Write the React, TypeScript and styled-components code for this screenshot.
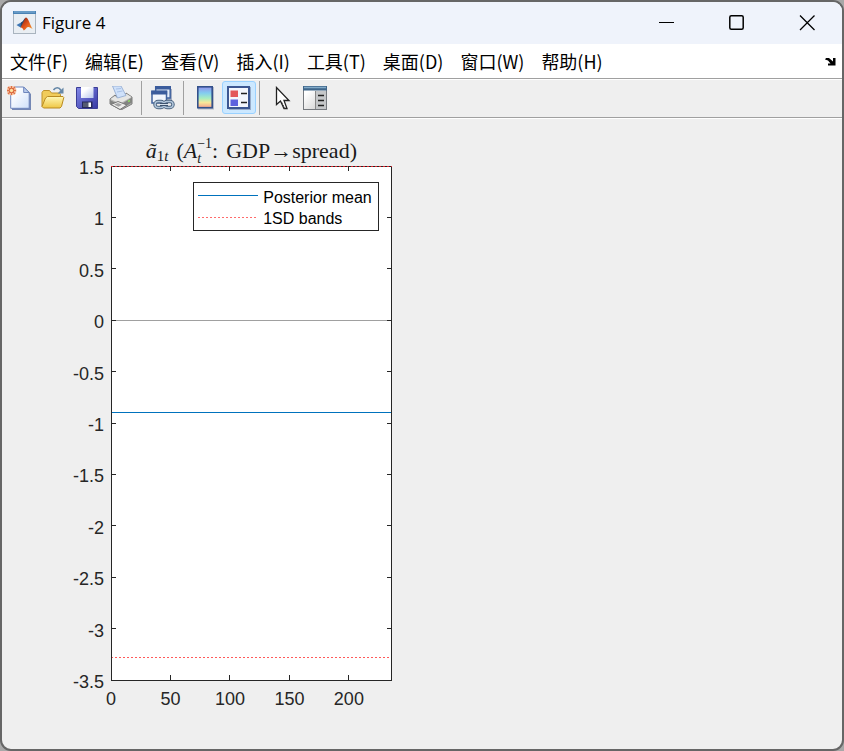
import React from "react";
import styled, { createGlobalStyle } from "styled-components";

const GlobalStyle = createGlobalStyle`
  *, *::before, *::after { box-sizing: border-box; }
  body { margin: 0; background: #a8a8a8; }
  button { font: inherit; color: inherit; }
`;

const Window = styled.main`
  display: flex;
  flex-direction: column;
  min-height: 100vh;
  border: 2px solid #666;
  border-radius: 11px;
  overflow: hidden;
  background: #efefef;
  color: #000;
  font-family: "Noto Sans", "Noto Sans CJK SC", sans-serif;
`;

const TitleBar = styled.header`
  display: flex;
  align-items: center;
  height: 42px;
  padding-left: 11px;
  gap: 5px;
  background: #eff3fb;
`;

const WindowTitle = styled.h1`
  flex: 1;
  margin: 0;
  font-family: "Open Sans", "Noto Sans", sans-serif;
  font-size: 17px;
  font-weight: 400;
  line-height: 24px;
`;

const WindowControls = styled.div`
  display: flex;
  height: 100%;
`;

const ControlButton = styled.button`
  display: grid;
  place-items: center;
  width: 70px;
  padding: 0;
  border: 0;
  background: transparent;
`;

const MenuBar = styled.nav`
  display: flex;
  align-items: center;
  gap: 17px;
  height: 34px;
  padding: 0 6px 0 8px;
  background: #fff;
  font-family: "Noto Sans CJK SC", sans-serif;
  font-size: 18px;
  line-height: 26px;
`;

const MenuButton = styled.button`
  padding: 0;
  border: 0;
  background: transparent;
  white-space: nowrap;
`;

const DockButton = styled(MenuButton)`
  display: flex;
  margin-left: auto;
`;

const ToolBar = styled.div`
  display: flex;
  align-items: flex-start;
  height: 41px;
  padding-top: 1px;
  border-top: 1px solid #a0a0a0;
  border-bottom: 1px solid #fff;
  box-shadow: inset 0 1px #fff, inset 0 -1px #a0a0a0;
`;

const ToolButton = styled.button<{ $active?: boolean }>`
  display: grid;
  place-items: center;
  flex: none;
  width: 34px;
  height: 33px;
  margin-top: 1px;
  padding: 0;
  border: 1px solid ${(p) => (p.$active ? "#99d1ff" : "transparent")};
  border-radius: 3px;
  background: ${(p) => (p.$active ? "#cce8ff" : "transparent")};
`;

const Separator = styled.span`
  width: 1px;
  height: 34px;
  margin: 1px 4px 0 3px;
  background: #a0a0a0;
`;

const Canvas = styled.section`
  display: flex;
  flex: 1;
  flex-direction: column;
  padding: 16px 0 69px 109px;
`;

const Axes = styled.figure`
  display: flex;
  flex: 1;
  flex-direction: column;
  width: 38.4%;
  min-width: 240px;
  margin: 0;
`;

const PlotTitle = styled.figcaption`
  display: flex;
  justify-content: center;
  align-items: baseline;
  height: 31px;
  color: #1a1a1a;
  font-family: "Liberation Serif", serif;
  font-size: 22px;
  line-height: 31px;
  white-space: nowrap;
`;

const Sub = styled.sub`
  font-size: 15px;
  line-height: 1;
  vertical-align: -3px;
`;

const Scripts = styled.span`
  display: inline-grid;
  align-self: center;
  font-size: 14px;
  line-height: 15px;
`;

const Gap = styled.span`
  width: 8px;
`;

const PlotArea = styled.div`
  position: relative;
  flex: 1;
  min-height: 240px;
`;

const PlotSvg = styled.svg`
  position: absolute;
  inset: 0;
  width: 100%;
  height: 100%;
  overflow: visible;
  shape-rendering: crispEdges;
  font-family: "Liberation Sans", sans-serif;
  font-size: 18px;
  fill: #262626;
`;

const Legend = styled.ul`
  position: absolute;
  top: 16px;
  right: 13px;
  display: flex;
  flex-direction: column;
  margin: 0;
  padding: 4px 6px 1px 4px;
  list-style: none;
  border: 1px solid #262626;
  background: #fff;
  color: #000;
  font-family: "Liberation Sans", sans-serif;
  font-size: 16px;
  line-height: 21px;
`;

const LegendItem = styled.li`
  display: flex;
  gap: 5px;
  height: 21px;
  white-space: nowrap;
`;

const X_MAX = 236;
const xPos = (v: number) => `${(v / X_MAX) * 100}%`;
const yPos = (v: number) => `${((1.5 - v) / 5) * 100}%`;
const X_TICKS = [0, 50, 100, 150, 200];
const Y_TICKS = [1.5, 1, 0.5, 0, -0.5, -1, -1.5, -2, -2.5, -3, -3.5];
const MENUS = ["文件(F)", "编辑(E)", "查看(V)", "插入(I)", "工具(T)", "桌面(D)", "窗口(W)", "帮助(H)"];

function Icon({ children }: { children: React.ReactNode }) {
  return (
    <svg width="24" height="24" viewBox="0 0 24 24" aria-hidden="true">
      {children}
    </svg>
  );
}

const MatlabIcon = () => (
  <Icon>
    <defs>
      <linearGradient id="peak" x1="0" y1="0" x2="1" y2="1">
        <stop offset="0" stopColor="#7c1c12" />
        <stop offset=".5" stopColor="#e0521b" />
        <stop offset="1" stopColor="#f6a02c" />
      </linearGradient>
    </defs>
    <rect x=".5" y=".5" width="22" height="22" fill="#e9eef3" stroke="#a9b4bf" />
    <path d="M0 0h23v3H0z" fill="#4a82b4" />
    <path d="M1 1h21" stroke="#86b4da" />
    <path d="M3.500 14 8 11.400l2.600.5-3 4.600-1.700-1z" fill="#3d76b4" />
    <path d="M8 11.400c2-.6 3.400-4.600 4.900-4.700L10.600 14l-3 2.500z" fill="#29486f" />
    <path d="M12.900 6.500c-1.300 1-2.700 5.600-5.300 10 1.500-.1 2.200 1.200 3.200 3 1.600-.6 2.500-3.200 4.200-3.500 1.700-.2 2.700.8 4.700 2.200-2.400-3.200-4.400-12.200-6.800-11.700z" fill="url(#peak)" />
  </Icon>
);

const NewIcon = () => (
  <Icon>
    <defs>
      <linearGradient id="paper" x1="0" y1="0" x2="1" y2="1">
        <stop offset=".2" stopColor="#fff" />
        <stop offset="1" stopColor="#cfe0fa" />
      </linearGradient>
    </defs>
    <path d="M5 2h13l6 6v16H5z" fill="#7487b4" />
    <path d="M3.700 1h13l5.500 5.500v15.800H3.700z" fill="url(#paper)" stroke="#6e86bd" />
    <path d="M16.700 1v5.500h5.500z" fill="#b9cbea" stroke="#6e86bd" />
    <circle cx="4.500" cy="4.500" r="5" fill="#f8c9ab" />
    <path d="M4.500 0v9M0 4.500h9M1 1l7 7M8 1 1 8" stroke="#de7045" strokeWidth="1.300" />
    <circle cx="4.500" cy="4.500" r="2.200" fill="#ffe3a1" stroke="#d85c35" />
  </Icon>
);

const OpenIcon = () => (
  <Icon>
    <defs>
      <linearGradient id="folder" x1="0" y1="0" x2="0" y2="1">
        <stop offset="0" stopColor="#fff8b4" />
        <stop offset="1" stopColor="#efc644" />
      </linearGradient>
    </defs>
    <path d="M1 20.500V6.500l1.500-2h6l2 2.500h8l1 1.500v4" fill="#f1cc5a" stroke="#bf922a" />
    <path d="M1 20.500 4.500 12l2-1.500h15.500l.8 1-2.300 9-1.500 1.500H2.500z" fill="url(#folder)" stroke="#b98a20" />
    <path d="M12.500 4c2-3 5.500-3.200 7.500.5" fill="none" stroke="#6688a8" strokeWidth="1.700" />
    <path d="M22.500 1.500v6h-6z" fill="#6688a8" />
  </Icon>
);

const SaveIcon = () => (
  <Icon>
    <defs>
      <linearGradient id="disk" x1="0" y1="0" x2="1" y2="1">
        <stop offset="0" stopColor="#8389e8" />
        <stop offset="1" stopColor="#3638a4" />
      </linearGradient>
      <linearGradient id="diskLabel" x1="0" y1="0" x2="1" y2="1">
        <stop offset=".3" stopColor="#fff" />
        <stop offset="1" stopColor="#b8c6ec" />
      </linearGradient>
    </defs>
    <path d="M1.500 1.500h21v21h-19l-2-2z" fill="url(#disk)" stroke="#3b3d96" />
    <path d="M6 1h12.500v11H6z" fill="url(#diskLabel)" />
    <path d="M7 15.500h10.500V22H7z" fill="#26285c" />
    <path d="M8 16.500h6V21H8z" fill="#555a72" />
    <path d="M13.500 16.500H16V21h-2.500z" fill="#fff" />
  </Icon>
);

const PrintIcon = () => (
  <Icon>
    <path d="m1 13 5-4 2 2 8-2 1-2 6 4v7l-11 6L1 18z" fill="#b4b4b2" stroke="#7c7c7c" />
    <path d="m1.500 13 9.500 4.500 11.500-6.500-5-3-9.500 4-2-2z" fill="#e6e6e4" />
    <path d="M3.500 0h8.500l5 9.500-8.500 2.500z" fill="#cfe1fa" stroke="#9db4d6" />
    <path d="m7 3 5-.5M8 6l5.500-1" stroke="#a9c1e6" />
    <path d="m1 14 10 5 12-7.500v5L12 23 1 18z" fill="#838482" />
    <path d="m2 18.500 7-3 9 3.500-7 4.500z" fill="#eeeeec" stroke="#777" />
    <path d="m5 18.500 4-1.500 4 1.700-3.500 2z" fill="#a4a4a4" />
    <path d="m19 15.500 2-1" stroke="#8fdc62" strokeWidth="1.500" />
  </Icon>
);

const LinkIcon = () => (
  <Icon>
    <path d="M6 3h15v11H6z" fill="#7584a5" opacity=".6" />
    <rect x="4.700" y="1" width="14.500" height="11" fill="#e4ecf8" stroke="#41639f" strokeWidth="1.500" />
    <path d="M4 0h16v3.500H4z" fill="#3b5c9c" />
    <rect x="1" y="5.500" width="14.500" height="11.500" fill="#f1f5fc" stroke="#41639f" strokeWidth="1.500" />
    <path d="M.2 4.500h16v4H.2z" fill="#3b5c9c" />
    <rect x="4" y="15.500" width="9" height="6" rx="3" fill="none" stroke="#4c6480" strokeWidth="3.500" />
    <rect x="13" y="15.500" width="9" height="6" rx="3" fill="none" stroke="#4c6480" strokeWidth="3.500" />
    <rect x="4" y="15.500" width="9" height="6" rx="3" fill="none" stroke="#b0c5da" strokeWidth="1.500" />
    <rect x="13" y="15.500" width="9" height="6" rx="3" fill="none" stroke="#b0c5da" strokeWidth="1.500" />
    <path d="M9 18.500h8" stroke="#3e536e" strokeWidth="3" />
    <path d="M9 18.500h8" stroke="#d5e1ec" />
  </Icon>
);

const ColorbarIcon = () => (
  <Icon>
    <defs>
      <linearGradient id="spectrum" x1="0" y1="0" x2="0" y2="1">
        <stop offset="0" stopColor="#9290ea" />
        <stop offset=".3" stopColor="#83cdf0" />
        <stop offset=".55" stopColor="#a8edc0" />
        <stop offset=".75" stopColor="#f6e89a" />
        <stop offset="1" stopColor="#f6a08c" />
      </linearGradient>
    </defs>
    <path d="M5 1h16v22.500H5z" fill="#8e96ac" opacity=".6" />
    <rect x="4.800" y=".8" width="14.400" height="20.900" fill="url(#spectrum)" stroke="#33508a" strokeWidth="1.600" />
  </Icon>
);

const LegendIcon = () => (
  <Icon>
    <path d="M2 1h22v23H2z" fill="#7584a5" opacity=".6" />
    <rect x="1" y="1" width="21" height="21" fill="#f4f7fd" stroke="#3c5792" strokeWidth="2" />
    <path d="M3.500 4.500H11V11H3.500z" fill="#e3585b" />
    <path d="M3.500 13.500H11V20H3.500z" fill="#5e62de" />
    <path d="M14 7.500h6M14 16.500h6" stroke="#222" strokeWidth="1.600" />
  </Icon>
);

const PointerIcon = () => (
  <Icon>
    <path d="M7.500 1.500v17l4-3.500 3.500 7.500h3L15 14.500h5z" fill="#fff" stroke="#222" strokeWidth="1.300" />
    <path d="m12.500 16 3.500 7" stroke="#333" strokeDasharray="2 1" />
  </Icon>
);

const InspectorIcon = () => (
  <Icon>
    <defs>
      <linearGradient id="panel" x1="0" y1="0" x2="1" y2="1">
        <stop offset=".2" stopColor="#fff" />
        <stop offset="1" stopColor="#c8c8c8" />
      </linearGradient>
    </defs>
    <rect x=".5" y=".5" width="23" height="23" fill="url(#panel)" stroke="#75797e" />
    <path d="M0 0h24v4.500H0z" fill="#3f668a" />
    <path d="M1 1.500h22" stroke="#82abc9" strokeWidth="1.500" />
    <path d="M13 5h10v18H13z" fill="#c5c7c9" />
    <path d="M12.500 5v18" stroke="#888" />
    <path d="M15 9.500h6M15 14.500h6M15 19.500h6" stroke="#222" strokeWidth="1.500" />
  </Icon>
);

function Plot() {
  return (
    <PlotArea>
      <PlotSvg role="img" aria-label="Posterior mean with one standard deviation bands">
        <rect width="100%" height="100%" fill="#fff" />
        <line x1="0" x2="100%" y1={yPos(0)} y2={yPos(0)} stroke="#a0a0a0" />
        <line x1="0" x2="100%" y1={yPos(-0.893)} y2={yPos(-0.893)} stroke="#0072bd" />
        <line x1="0" x2="100%" y1={yPos(-3.28)} y2={yPos(-3.28)} stroke="#ff5a5a" strokeDasharray="2 2" />
        <rect width="100%" height="100%" fill="none" stroke="#262626" />
        <line x1="0" x2="100%" y1="0" y2="0" stroke="#e0202a" strokeDasharray="2 2" />
        {X_TICKS.map((t) => (
          <g key={t}>
            {t > 0 && (
              <>
                <svg x={xPos(t)} y="100%" overflow="visible"><path d="M0 0v-5" stroke="#262626" /></svg>
                <svg x={xPos(t)} y="0" overflow="visible"><path d="M0 0v5" stroke="#262626" /></svg>
              </>
            )}
            <text x={xPos(t)} y="100%" dy="25" textAnchor="middle">{t}</text>
          </g>
        ))}
        {Y_TICKS.map((t) => (
          <g key={t}>
            {Math.abs(t + 1) < 2.5 && (
              <>
                <svg x="0" y={yPos(t)} overflow="visible"><path d="M0 0h5" stroke="#262626" /></svg>
                <svg x="100%" y={yPos(t)} overflow="visible"><path d="M0 0h-5" stroke="#262626" /></svg>
              </>
            )}
            <text x="0" y={yPos(t)} dx="-7" dy="8" textAnchor="end">{t}</text>
          </g>
        ))}
      </PlotSvg>
      <Legend>
        <LegendItem>
          <svg width="60" height="20" aria-hidden="true"><path d="M0 8.500h60" stroke="#0072bd" /></svg>
          Posterior mean
        </LegendItem>
        <LegendItem>
          <svg width="60" height="20" aria-hidden="true"><path d="M0 9.500h58" stroke="#ff6b6b" strokeDasharray="2 2" /></svg>
          1SD bands
        </LegendItem>
      </Legend>
    </PlotArea>
  );
}

export default function App() {
  return (
    <>
      <GlobalStyle />
      <Window>
        <TitleBar>
          <MatlabIcon />
          <WindowTitle>Figure 4</WindowTitle>
          <WindowControls>
            <ControlButton aria-label="Minimize">
              <svg width="16" height="16"><path d="M0 7.500h15" stroke="#000" /></svg>
            </ControlButton>
            <ControlButton aria-label="Maximize">
              <svg width="16" height="16"><rect x=".8" y=".8" width="13.400" height="13.400" rx="1.500" fill="none" stroke="#000" strokeWidth="1.500" /></svg>
            </ControlButton>
            <ControlButton aria-label="Close">
              <svg width="16" height="16"><path d="M1 .5 15.500 15M15.500.5 1 15" stroke="#000" strokeWidth="1.300" /></svg>
            </ControlButton>
          </WindowControls>
        </TitleBar>
        <MenuBar>
          {MENUS.map((m) => <MenuButton key={m}>{m}</MenuButton>)}
          <DockButton aria-label="Dock figure">
            <svg width="11" height="9"><path d="M0 2.500 1 1h3l4 3.500V1h2.500v7.500H3V6.500h2.500L3 3.500z" fill="#000" /></svg>
          </DockButton>
        </MenuBar>
        <ToolBar role="toolbar">
          <ToolButton aria-label="New figure"><NewIcon /></ToolButton>
          <ToolButton aria-label="Open file"><OpenIcon /></ToolButton>
          <ToolButton aria-label="Save figure"><SaveIcon /></ToolButton>
          <ToolButton aria-label="Print figure"><PrintIcon /></ToolButton>
          <Separator />
          <ToolButton aria-label="Link plot"><LinkIcon /></ToolButton>
          <Separator />
          <ToolButton aria-label="Insert colorbar"><ColorbarIcon /></ToolButton>
          <ToolButton aria-label="Insert legend" aria-pressed="true" $active><LegendIcon /></ToolButton>
          <Separator />
          <ToolButton aria-label="Edit plot"><PointerIcon /></ToolButton>
          <ToolButton aria-label="Open property inspector"><InspectorIcon /></ToolButton>
        </ToolBar>
        <Canvas>
          <Axes>
            <PlotTitle>
              <span><i>ã</i><Sub>1<i>t</i></Sub></span>
              <Gap />
              <span>(<i>A</i></span>
              <Scripts><span>−1</span><i>t</i></Scripts>
              <span>:</span>
              <Gap />
              <span>GDP→spread)</span>
            </PlotTitle>
            <Plot />
          </Axes>
        </Canvas>
      </Window>
    </>
  );
}
